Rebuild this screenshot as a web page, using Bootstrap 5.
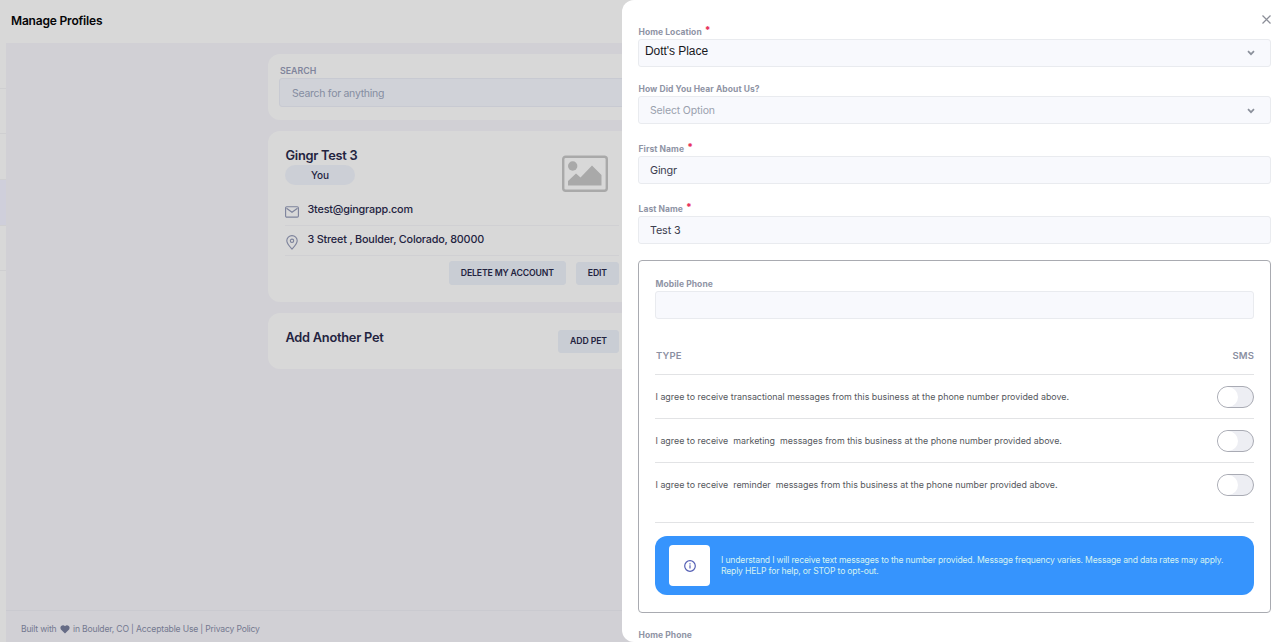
<!DOCTYPE html>
<html lang="en">
<head>
<meta charset="utf-8">
<meta name="viewport" content="width=device-width, initial-scale=1">
<title>Manage Profiles</title>
<link href="https://cdn.jsdelivr.net/npm/bootstrap@5.3.0/dist/css/bootstrap.min.css" rel="stylesheet">
<style>
  body { font-family: Inter, "Liberation Sans", sans-serif; height: 642px; overflow: hidden; background: #d8d8d8; color: #23233f; font-size: 11px; line-height: 16px; }
  .side-strip { width: 6px; padding-top: 43px; }
  .side-strip div { height: 45.7px; border-bottom: 1px solid #cfcfd1; }
  .side-strip .current { background: #cfcfdb; }
  .page-head { height: 43px; padding: 0 0 1px 5px; color: #050507; font-size: 12px; letter-spacing: -.18px; }
  .page-main { background: #d1d0d5; height: 599px; }
  .profile-col { width: 368px; margin-left: 262px; padding-top: 11px; gap: 11px; }
  .tile { background: #d8d8d8; border-radius: 12px; }
  .tile-search { height: 66px; padding: 10px 11px; }
  .tile-search label { font-size: 8.8px; line-height: 13px; color: #80859c; margin-bottom: 1px; padding-left: 1px; }
  .tile-search .form-control { height: 29px; background: #d0d2d8; border-color: #c8cad2; border-radius: 3px; font-size: 10.5px; letter-spacing: -.28px; padding: 2px 12px 0; }
  .tile-search .form-control::placeholder { color: #858da1; }
  .tile-profile { height: 171px; padding: 16px 17px; }
  .tile-title { font-size: 12.8px; line-height: 17px; letter-spacing: -.25px; margin: 0; padding-left: .5px; }
  .you-pill { width: 70px; height: 20px; background: #cccfd6; border-radius: 10px; font-size: 10px; margin-top: 1px; letter-spacing: -.1px; }
  .photo-icon { margin: 8px 11px 0 0; }
  .info-row { height: 30px; border-bottom: 1px solid #d0d0d3; font-size: 10.8px; letter-spacing: -.18px; }
  .info-row svg { margin: 9px 8px 0 0; }
  .info-row span { line-height: 27px; padding-left: .5px; }
  .btn-line { gap: 10px; margin-top: 5px; }
  .btn-soft { --bs-btn-bg: #c9cdd4; --bs-btn-color: #23233f; --bs-btn-border-color: #c9cdd4; font-size: 8.7px; font-weight: 600; line-height: 12px; padding: 4px 11px; border-radius: 3px; height: 23px; letter-spacing: -.1px; }
  .btn-tall { height: 24px; letter-spacing: -.15px; }
  .tile-add { height: 56px; padding: 0 17px; }
  .tile-add .tile-title { margin-bottom: 7px; }
  .page-foot { height: 32px; border-top: 1px solid #cacad0; padding: 10px 15px 0; font-size: 8.6px; letter-spacing: -.17px; color: #747990; }
  .page-foot svg { margin: 0 1px; }
  .drawer { position: absolute; inset: 0 0 0 622px; background: #fff; border-radius: 12px 0 0 12px; overflow: hidden; padding: 24px 9px 0 16px; }
  .drawer-close { position: absolute; top: 15px; right: 9px; }
  .field-label { display: block; font-size: 8.5px; line-height: 17px; letter-spacing: .07px; font-weight: 700; color: #8f94a5; margin: 0; height: 15px; padding-left: .5px; }
  .field-label b { color: #e8365d; font-size: 9.5px; line-height: 12px; margin-left: 1px; vertical-align: top; }
  .drawer .form-control, .pick { height: 28px; background: #f8f9fd; border: 1px solid #e9ebef; border-radius: 3px; font-size: 10.8px; letter-spacing: -.15px; line-height: 16px; padding: 1px 11px 0; color: #3d4050; }
  .pick { padding: 2px 15px 0 11px; color: #9aa1ae; }
  .pick span { font-size: 10.5px; }
  .pick-set { padding: 0 15px 0 6px; }
  .pick-set span { font-family: "Liberation Sans", Arial, sans-serif; font-size: 12px; letter-spacing: -.05px; color: #17181c; padding-bottom: 4px; }
  .field-tight { margin-top: 14px; }
  .field-wide { margin-top: 17px; }
  .phone-panel { height: 353px; margin-top: 16px; padding: 15px 16px 0; border: 1px solid #a9abb1; border-radius: 4px; }
  .agree-head { height: 40px; margin-top: 16px; padding: 3px 0 0 1px; font-size: 9.5px; font-weight: 600; color: #8b90a2; letter-spacing: .15px; border-bottom: 1px solid #e2e3e5; }
  .agree-row { height: 43px; font-size: 8.9px; color: #55575d; white-space: pre; padding-left: .5px; }
  .agree-row + .agree-row { height: 44px; border-top: 1px solid #e2e3e5; }
  .switch { width: 37px; height: 22px; border: 1px solid #a9abb4; border-radius: 11px; background: linear-gradient(90deg, #fff, #fff) 0 0 / 10px 100% no-repeat #edeef3; overflow: hidden; }
  .switch i { width: 20px; height: 20px; border-radius: 50%; background: #fff; display: block; }
  .panel-rule { border-top: 1px solid #e2e3e5; margin: 16px 0 13px; opacity: 1; }
  .notice { height: 59px; border-radius: 12px; background: #3694fd; color: #d5f2f1; font-size: 8.6px; letter-spacing: -.17px; line-height: 10.5px; padding: 0 14px; gap: 11px; white-space: nowrap; }
  .notice-icon { width: 41px; height: 41px; border-radius: 4px; background: #fff; }
  .next-label { margin-top: 14px; }
</style>
</head>
<body class="position-relative">
<div class="d-flex h-100">
  <nav class="side-strip flex-shrink-0"><div></div><div></div><div></div><div class="current"></div><div></div></nav>
  <div class="flex-grow-1">
    <header class="page-head d-flex align-items-center fw-semibold">Manage Profiles</header>
    <main class="page-main d-flex flex-column">
      <div class="profile-col d-flex flex-column flex-grow-1">
        <section class="tile tile-search">
          <label class="d-block fw-semibold" for="q">SEARCH</label>
          <input class="form-control" id="q" placeholder="Search for anything">
        </section>
        <section class="tile tile-profile">
          <div class="d-flex justify-content-between">
            <div>
              <h2 class="tile-title fw-semibold">Gingr Test 3</h2>
              <div class="you-pill d-flex align-items-center justify-content-center fw-medium">You</div>
            </div>
            <svg class="photo-icon" width="46" height="37" viewBox="0 0 46 37"><rect x="1.2" y="1.7" width="43.6" height="34" rx="2.5" fill="none" stroke="#a9a9a9" stroke-width="2.4"/><circle cx="10.7" cy="11" r="4.7" fill="#a9a9a9"/><path d="M6 30.500v-4.500l8-7.500 4.500 4L30 10.500l9.500 9.500v10.500z" fill="#a9a9a9"/></svg>
          </div>
          <div class="info-row d-flex fw-medium mt-1"><svg width="14" height="14" viewBox="0 0 14 14" fill="none" stroke="#7c829b" stroke-width="1.1"><rect x=".6" y="1.7" width="12.8" height="10.4" rx="1.2"/><path d="M1.500 3.200L7 7.300l5.500-4.100"/></svg><span>3test@gingrapp.com</span></div>
          <div class="info-row d-flex fw-medium"><svg width="14" height="15" viewBox="0 0 14 15" fill="none" stroke="#7c829b" stroke-width="1.1"><path d="M7 14C4 10.800 1.800 8.700 1.800 5.800a5.200 5.200 0 0 1 10.400 0C12.200 8.700 10 10.800 7 14z"/><circle cx="7" cy="5.8" r="1.7"/></svg><span>3 Street , Boulder, Colorado, 80000</span></div>
          <div class="btn-line d-flex justify-content-end align-items-center"><button class="btn btn-soft btn-tall">DELETE MY ACCOUNT</button><button class="btn btn-soft">EDIT</button></div>
        </section>
        <section class="tile tile-add d-flex justify-content-between align-items-center">
          <h2 class="tile-title fw-semibold">Add Another Pet</h2>
          <button class="btn btn-soft">ADD PET</button>
        </section>
      </div>
      <footer class="page-foot">Built with <svg width="10" height="9" viewBox="0 0 10 9" fill="#666c86"><path d="M5 8.500L.900 4.400C-1 1.500 3-1.200 5 1.300 7-1.200 11 1.500 9.100 4.400z"/></svg> in Boulder, CO | Acceptable Use | Privacy Policy</footer>
    </main>
  </div>
</div>

<aside class="drawer">
  <svg class="drawer-close" width="9" height="9" viewBox="0 0 9 9" stroke="#8b8e98" stroke-width="1.2"><path d="M.5.5l8 8M8.500.5l-8 8"/></svg>
  <div>
    <label class="field-label">Home Location <b>*</b></label>
    <div class="pick pick-set d-flex align-items-center justify-content-between"><span>Dott's Place</span><svg width="8" height="6" viewBox="0 0 8 6" fill="none" stroke="#8b909b" stroke-width="1.7"><path d="M1 1.200l3 3 3-3"/></svg></div>
  </div>
  <div class="field-tight">
    <label class="field-label">How Did You Hear About Us?</label>
    <div class="pick d-flex align-items-center justify-content-between"><span>Select Option</span><svg width="8" height="6" viewBox="0 0 8 6" fill="none" stroke="#8b909b" stroke-width="1.7"><path d="M1 1.200l3 3 3-3"/></svg></div>
  </div>
  <div class="field-wide">
    <label class="field-label">First Name <b>*</b></label>
    <input class="form-control" value="Gingr">
  </div>
  <div class="field-wide">
    <label class="field-label">Last Name <b>*</b></label>
    <input class="form-control" value="Test 3">
  </div>
  <section class="phone-panel">
    <label class="field-label">Mobile Phone</label>
    <input class="form-control">
    <div class="agree-head d-flex justify-content-between align-items-center"><span>TYPE</span><span>SMS</span></div>
    <div class="agree-row d-flex justify-content-between align-items-center"><span>I agree to receive transactional messages from this business at the phone number provided above.</span><div class="switch"><i></i></div></div>
    <div class="agree-row d-flex justify-content-between align-items-center"><span>I agree to receive  marketing  messages from this business at the phone number provided above.</span><div class="switch"><i></i></div></div>
    <div class="agree-row d-flex justify-content-between align-items-center"><span>I agree to receive  reminder  messages from this business at the phone number provided above.</span><div class="switch"><i></i></div></div>
    <hr class="panel-rule">
    <div class="notice d-flex align-items-center">
      <div class="notice-icon d-flex align-items-center justify-content-center flex-shrink-0"><svg width="12" height="12" viewBox="0 0 12 12" fill="none" stroke="#5560b5" stroke-width="1.2"><circle cx="6" cy="6" r="5.3"/><path d="M6 5.300v3.200M6 3.200v1.200"/></svg></div>
      <div>I understand I will receive text messages to the number provided. Message frequency varies. Message and data rates may apply.<br>Reply HELP for help, or STOP to opt-out.</div>
    </div>
  </section>
  <label class="field-label next-label">Home Phone</label>
</aside>
<script src="https://cdn.jsdelivr.net/npm/bootstrap@5.3.0/dist/js/bootstrap.bundle.min.js"></script>
</body>
</html>
